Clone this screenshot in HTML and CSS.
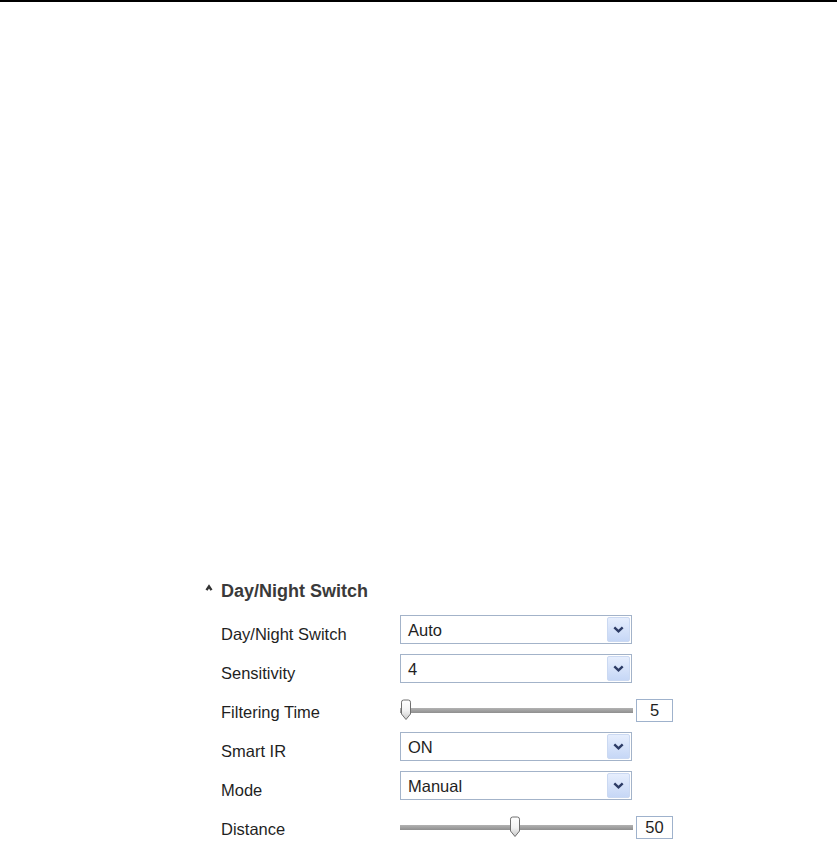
FILE: index.html
```html
<!DOCTYPE html>
<html lang="en">
<head>
<meta charset="utf-8">
<title>Day/Night Switch</title>
<link rel="stylesheet" href="styles.css">
</head>
<body>
<div class="topline"></div>
<section class="panel">
  <h2 class="title">
    <svg class="caret" width="16" height="22" viewBox="0 0 16 22"><polyline points="1.5,10.2 4,6.4 6.5,10.2" fill="none" stroke="#333333" stroke-width="2.4"/></svg>
    <span>Day/Night Switch</span>
  </h2>
  <div class="form">
    <div class="label">Day/Night Switch</div>
    <div class="control">
      <div class="select"><span class="value">Auto</span><span class="btn"><svg width="23" height="25" viewBox="0 0 23 25"><polyline points="7.3,10.3 11.5,14.4 15.7,10.3" fill="none" stroke="#2d3c66" stroke-width="2.4"/></svg></span></div>
    </div>

    <div class="label">Sensitivity</div>
    <div class="control">
      <div class="select"><span class="value">4</span><span class="btn"><svg width="23" height="25" viewBox="0 0 23 25"><polyline points="7.3,10.3 11.5,14.4 15.7,10.3" fill="none" stroke="#2d3c66" stroke-width="2.4"/></svg></span></div>
    </div>

    <div class="label">Filtering Time</div>
    <div class="control slider-row first">
      <div class="track">
        <svg class="thumb" style="left: 0px" width="12" height="22" viewBox="0 0 12 22"><defs><linearGradient id="tg1" x1="0" y1="0" x2="0" y2="1"><stop offset="0" stop-color="#ffffff"/><stop offset="0.55" stop-color="#f2f2f2"/><stop offset="1" stop-color="#c8c8c8"/></linearGradient></defs><path d="M1.5,3.2 Q1.5,1 3.7,1 H8.3 Q10.5,1 10.5,3.2 V15 L6,20.5 L1.5,15 Z" fill="url(#tg1)" stroke="#6f6f6f" stroke-width="1"/></svg>
      </div>
      <div class="num">5</div>
    </div>

    <div class="label">Smart IR</div>
    <div class="control">
      <div class="select"><span class="value">ON</span><span class="btn"><svg width="23" height="25" viewBox="0 0 23 25"><polyline points="7.3,10.3 11.5,14.4 15.7,10.3" fill="none" stroke="#2d3c66" stroke-width="2.4"/></svg></span></div>
    </div>

    <div class="label">Mode</div>
    <div class="control">
      <div class="select"><span class="value">Manual</span><span class="btn"><svg width="23" height="25" viewBox="0 0 23 25"><polyline points="7.3,10.3 11.5,14.4 15.7,10.3" fill="none" stroke="#2d3c66" stroke-width="2.4"/></svg></span></div>
    </div>

    <div class="label">Distance</div>
    <div class="control slider-row">
      <div class="track">
        <svg class="thumb" style="left: 109px" width="12" height="22" viewBox="0 0 12 22"><defs><linearGradient id="tg2" x1="0" y1="0" x2="0" y2="1"><stop offset="0" stop-color="#ffffff"/><stop offset="0.55" stop-color="#f2f2f2"/><stop offset="1" stop-color="#c8c8c8"/></linearGradient></defs><path d="M1.5,3.2 Q1.5,1 3.7,1 H8.3 Q10.5,1 10.5,3.2 V15 L6,20.5 L1.5,15 Z" fill="url(#tg2)" stroke="#6f6f6f" stroke-width="1"/></svg>
      </div>
      <div class="num">50</div>
    </div>
  </div>
</section>
</body>
</html>
```
FILE: styles.css
```css
html, body {
  margin: 0;
  padding: 0;
  height: 100%;
  overflow: hidden;
  background: #ffffff;
}

body {
  font-family: "Liberation Sans", Arial, sans-serif;
  color: #1f1f1f;
}

.topline {
  height: 2px;
  background: #000000;
}

.panel {
  padding: 578px 0 0 205px;
}

.title {
  margin: 0;
  display: flex;
  align-items: flex-start;
  height: 22px;
  font-size: 18px;
  line-height: 22px;
  font-weight: bold;
  color: #3a3a3a;
}

.caret {
  display: block;
  flex: none;
}

.form {
  margin: 8px 0 0 16px;
  display: grid;
  grid-template-columns: 179px 280px;
  grid-auto-rows: 39px;
}

.label {
  font-size: 16.5px;
  line-height: 20px;
  padding-top: 14px;
  white-space: nowrap;
}

.control {
  display: flex;
  align-items: flex-start;
}

.select {
  box-sizing: border-box;
  margin-top: 5px;
  width: 232px;
  height: 29px;
  border: 1px solid #a3b3c9;
  background: #ffffff;
  display: flex;
  align-items: center;
  padding: 0 1px 0 7px;
}

.value {
  font-size: 16.5px;
  line-height: 27px;
  padding-top: 1px;
  color: #1f1f1f;
}

.btn {
  margin-left: auto;
  width: 23px;
  height: 25px;
  box-sizing: border-box;
  border-radius: 2px;
  background: linear-gradient(#e6eefd, #c6d7f6);
  border: 1px solid #cbd9f2;
  display: flex;
  align-items: center;
  justify-content: center;
}

.btn svg {
  display: block;
  margin: -1px;
}

.slider-row {
  align-items: center;
  padding-top: 5px;
}

.slider-row.first {
  padding-top: 6px;
}

.track {
  position: relative;
  width: 233px;
  height: 5px;
  background: linear-gradient(#b2b2b2, #8f8f8f);
}

.thumb {
  position: absolute;
  top: -9px;
  display: block;
}

.num {
  box-sizing: border-box;
  margin-left: 3px;
  width: 37px;
  height: 23px;
  border: 1px solid #9fb2cc;
  font-size: 16.5px;
  line-height: 21px;
  text-align: center;
  color: #1f1f1f;
}
```
